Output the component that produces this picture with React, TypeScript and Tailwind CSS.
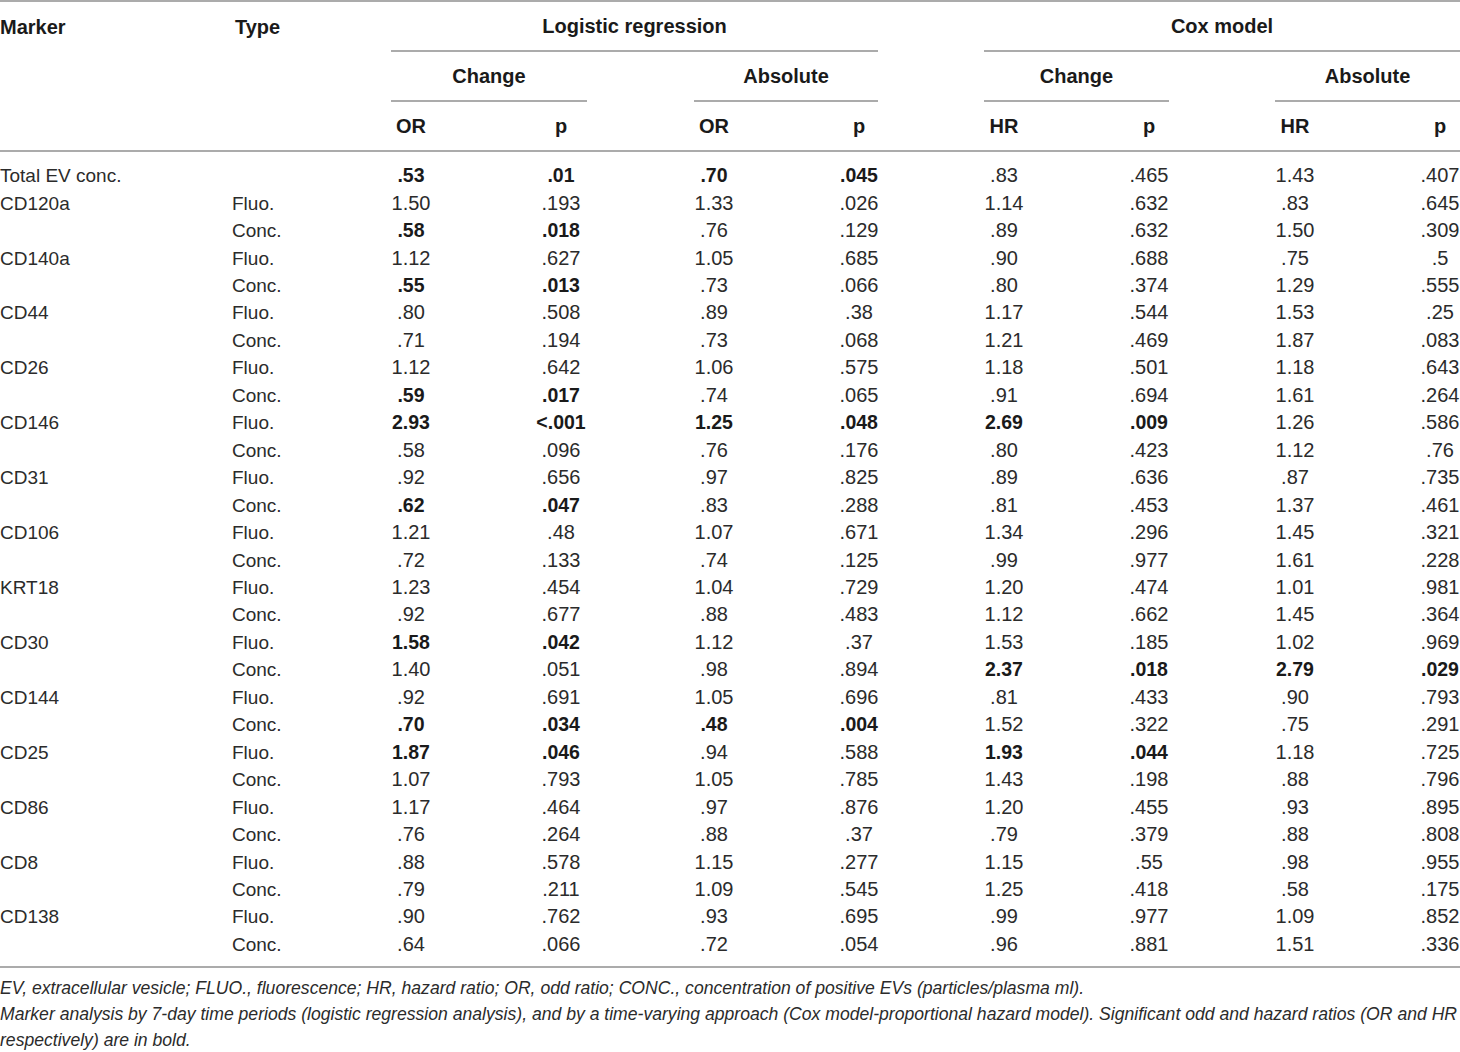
import React from "react";

const rows: string[][] = [
  ["Total EV conc.", "", "*.53", "*.01", "*.70", "*.045", ".83", ".465", "1.43", ".407"],
  ["CD120a", "Fluo.", "1.50", ".193", "1.33", ".026", "1.14", ".632", ".83", ".645"],
  ["", "Conc.", "*.58", "*.018", ".76", ".129", ".89", ".632", "1.50", ".309"],
  ["CD140a", "Fluo.", "1.12", ".627", "1.05", ".685", ".90", ".688", ".75", ".5"],
  ["", "Conc.", "*.55", "*.013", ".73", ".066", ".80", ".374", "1.29", ".555"],
  ["CD44", "Fluo.", ".80", ".508", ".89", ".38", "1.17", ".544", "1.53", ".25"],
  ["", "Conc.", ".71", ".194", ".73", ".068", "1.21", ".469", "1.87", ".083"],
  ["CD26", "Fluo.", "1.12", ".642", "1.06", ".575", "1.18", ".501", "1.18", ".643"],
  ["", "Conc.", "*.59", "*.017", ".74", ".065", ".91", ".694", "1.61", ".264"],
  ["CD146", "Fluo.", "*2.93", "*<.001", "*1.25", "*.048", "*2.69", "*.009", "1.26", ".586"],
  ["", "Conc.", ".58", ".096", ".76", ".176", ".80", ".423", "1.12", ".76"],
  ["CD31", "Fluo.", ".92", ".656", ".97", ".825", ".89", ".636", ".87", ".735"],
  ["", "Conc.", "*.62", "*.047", ".83", ".288", ".81", ".453", "1.37", ".461"],
  ["CD106", "Fluo.", "1.21", ".48", "1.07", ".671", "1.34", ".296", "1.45", ".321"],
  ["", "Conc.", ".72", ".133", ".74", ".125", ".99", ".977", "1.61", ".228"],
  ["KRT18", "Fluo.", "1.23", ".454", "1.04", ".729", "1.20", ".474", "1.01", ".981"],
  ["", "Conc.", ".92", ".677", ".88", ".483", "1.12", ".662", "1.45", ".364"],
  ["CD30", "Fluo.", "*1.58", "*.042", "1.12", ".37", "1.53", ".185", "1.02", ".969"],
  ["", "Conc.", "1.40", ".051", ".98", ".894", "*2.37", "*.018", "*2.79", "*.029"],
  ["CD144", "Fluo.", ".92", ".691", "1.05", ".696", ".81", ".433", ".90", ".793"],
  ["", "Conc.", "*.70", "*.034", "*.48", "*.004", "1.52", ".322", ".75", ".291"],
  ["CD25", "Fluo.", "*1.87", "*.046", ".94", ".588", "*1.93", "*.044", "1.18", ".725"],
  ["", "Conc.", "1.07", ".793", "1.05", ".785", "1.43", ".198", ".88", ".796"],
  ["CD86", "Fluo.", "1.17", ".464", ".97", ".876", "1.20", ".455", ".93", ".895"],
  ["", "Conc.", ".76", ".264", ".88", ".37", ".79", ".379", ".88", ".808"],
  ["CD8", "Fluo.", ".88", ".578", "1.15", ".277", "1.15", ".55", ".98", ".955"],
  ["", "Conc.", ".79", ".211", "1.09", ".545", "1.25", ".418", ".58", ".175"],
  ["CD138", "Fluo.", ".90", ".762", ".93", ".695", ".99", ".977", "1.09", ".852"],
  ["", "Conc.", ".64", ".066", ".72", ".054", ".96", ".881", "1.51", ".336"],
];

const GRID =
  "grid grid-cols-[232px_159px_40px_104px_52px_107px_40px_106px_38px_106px_40px_105px_40px_106px_40px_105px_40px]";

const numCols = [
  "col-start-3",
  "col-start-5",
  "col-start-7",
  "col-start-9",
  "col-start-11",
  "col-start-13",
  "col-start-15",
  "col-start-17",
];

function Num({ v, col }: { v: string; col: string }) {
  const bold = v.startsWith("*");
  const t = bold ? v.slice(1) : v;
  return (
    <div
      className={`${col} flex justify-center whitespace-nowrap ${
        bold ? "font-bold text-[19.5px] text-[#1a1a1a]" : "text-[20px]"
      }`}
    >
      {t}
    </div>
  );
}

export default function App() {
  return (
    <div
      className="w-[1460px] bg-white text-[#2b2b2b] text-[19px]"
      style={{ fontFamily: '"Liberation Sans", Arial, sans-serif' }}
    >
      <div className="h-[2px] bg-[#ababab]" />
      {/* Header */}
      <div className={`${GRID} font-bold text-[20px] text-[#1a1a1a]`}>
        {/* row 1 */}
        <div className="col-start-1 row-start-1 h-[50px] flex items-center whitespace-nowrap">Marker</div>
        <div className="col-start-2 row-start-1 h-[50px] flex items-center pl-[3px]">Type</div>
        <div className="col-start-3 col-span-7 row-start-1 h-[50px] flex items-center justify-center border-b-2 border-[#ababab]">
          Logistic regression
        </div>
        <div className="col-start-11 col-span-7 row-start-1 h-[50px] flex items-center justify-center border-b-2 border-[#ababab]">
          Cox model
        </div>
        {/* row 2 */}
        <div className="col-start-3 col-span-3 row-start-2 h-[50px] flex items-center justify-center border-b-2 border-[#ababab]">
          Change
        </div>
        <div className="col-start-7 col-span-3 row-start-2 h-[50px] flex items-center justify-center border-b-2 border-[#ababab]">
          Absolute
        </div>
        <div className="col-start-11 col-span-3 row-start-2 h-[50px] flex items-center justify-center border-b-2 border-[#ababab]">
          Change
        </div>
        <div className="col-start-15 col-span-3 row-start-2 h-[50px] flex items-center justify-center border-b-2 border-[#ababab]">
          Absolute
        </div>
        {/* row 3 */}
        {["OR", "p", "OR", "p", "HR", "p", "HR", "p"].map((h, i) => (
          <div
            key={i}
            className={`${numCols[i]} row-start-3 h-[48px] flex items-center justify-center whitespace-nowrap`}
          >
            {h}
          </div>
        ))}
      </div>
      <div className="h-[2px] bg-[#ababab]" />
      {/* Body */}
      <div className="pt-[10px] pb-[8px]">
        {rows.map((r, ri) => (
          <div key={ri} className={`${GRID} h-[27.46px] items-center leading-[27px]`}>
            <div className="col-start-1 whitespace-nowrap">{r[0]}</div>
            <div className="col-start-2 whitespace-nowrap">{r[1]}</div>
            {r.slice(2).map((v, i) => (
              <Num key={i} v={v} col={numCols[i]} />
            ))}
          </div>
        ))}
      </div>
      <div className="h-[2px] bg-[#ababab]" />
      {/* Footnotes */}
      <div className="pt-[7px] italic text-[17.6px] leading-[26px] text-[#2b2b2b]">
        <div className="whitespace-nowrap">
          EV, extracellular vesicle; FLUO., fluorescence; HR, hazard ratio; OR, odd ratio; CONC., concentration of
          positive EVs (particles/plasma ml).
        </div>
        <div className="whitespace-nowrap">
          Marker analysis by 7-day time periods (logistic regression analysis), and by a time-varying approach (Cox
          model-proportional hazard model). Significant odd and hazard ratios (OR and HR
        </div>
        <div className="whitespace-nowrap">respectively) are in bold.</div>
      </div>
    </div>
  );
}
